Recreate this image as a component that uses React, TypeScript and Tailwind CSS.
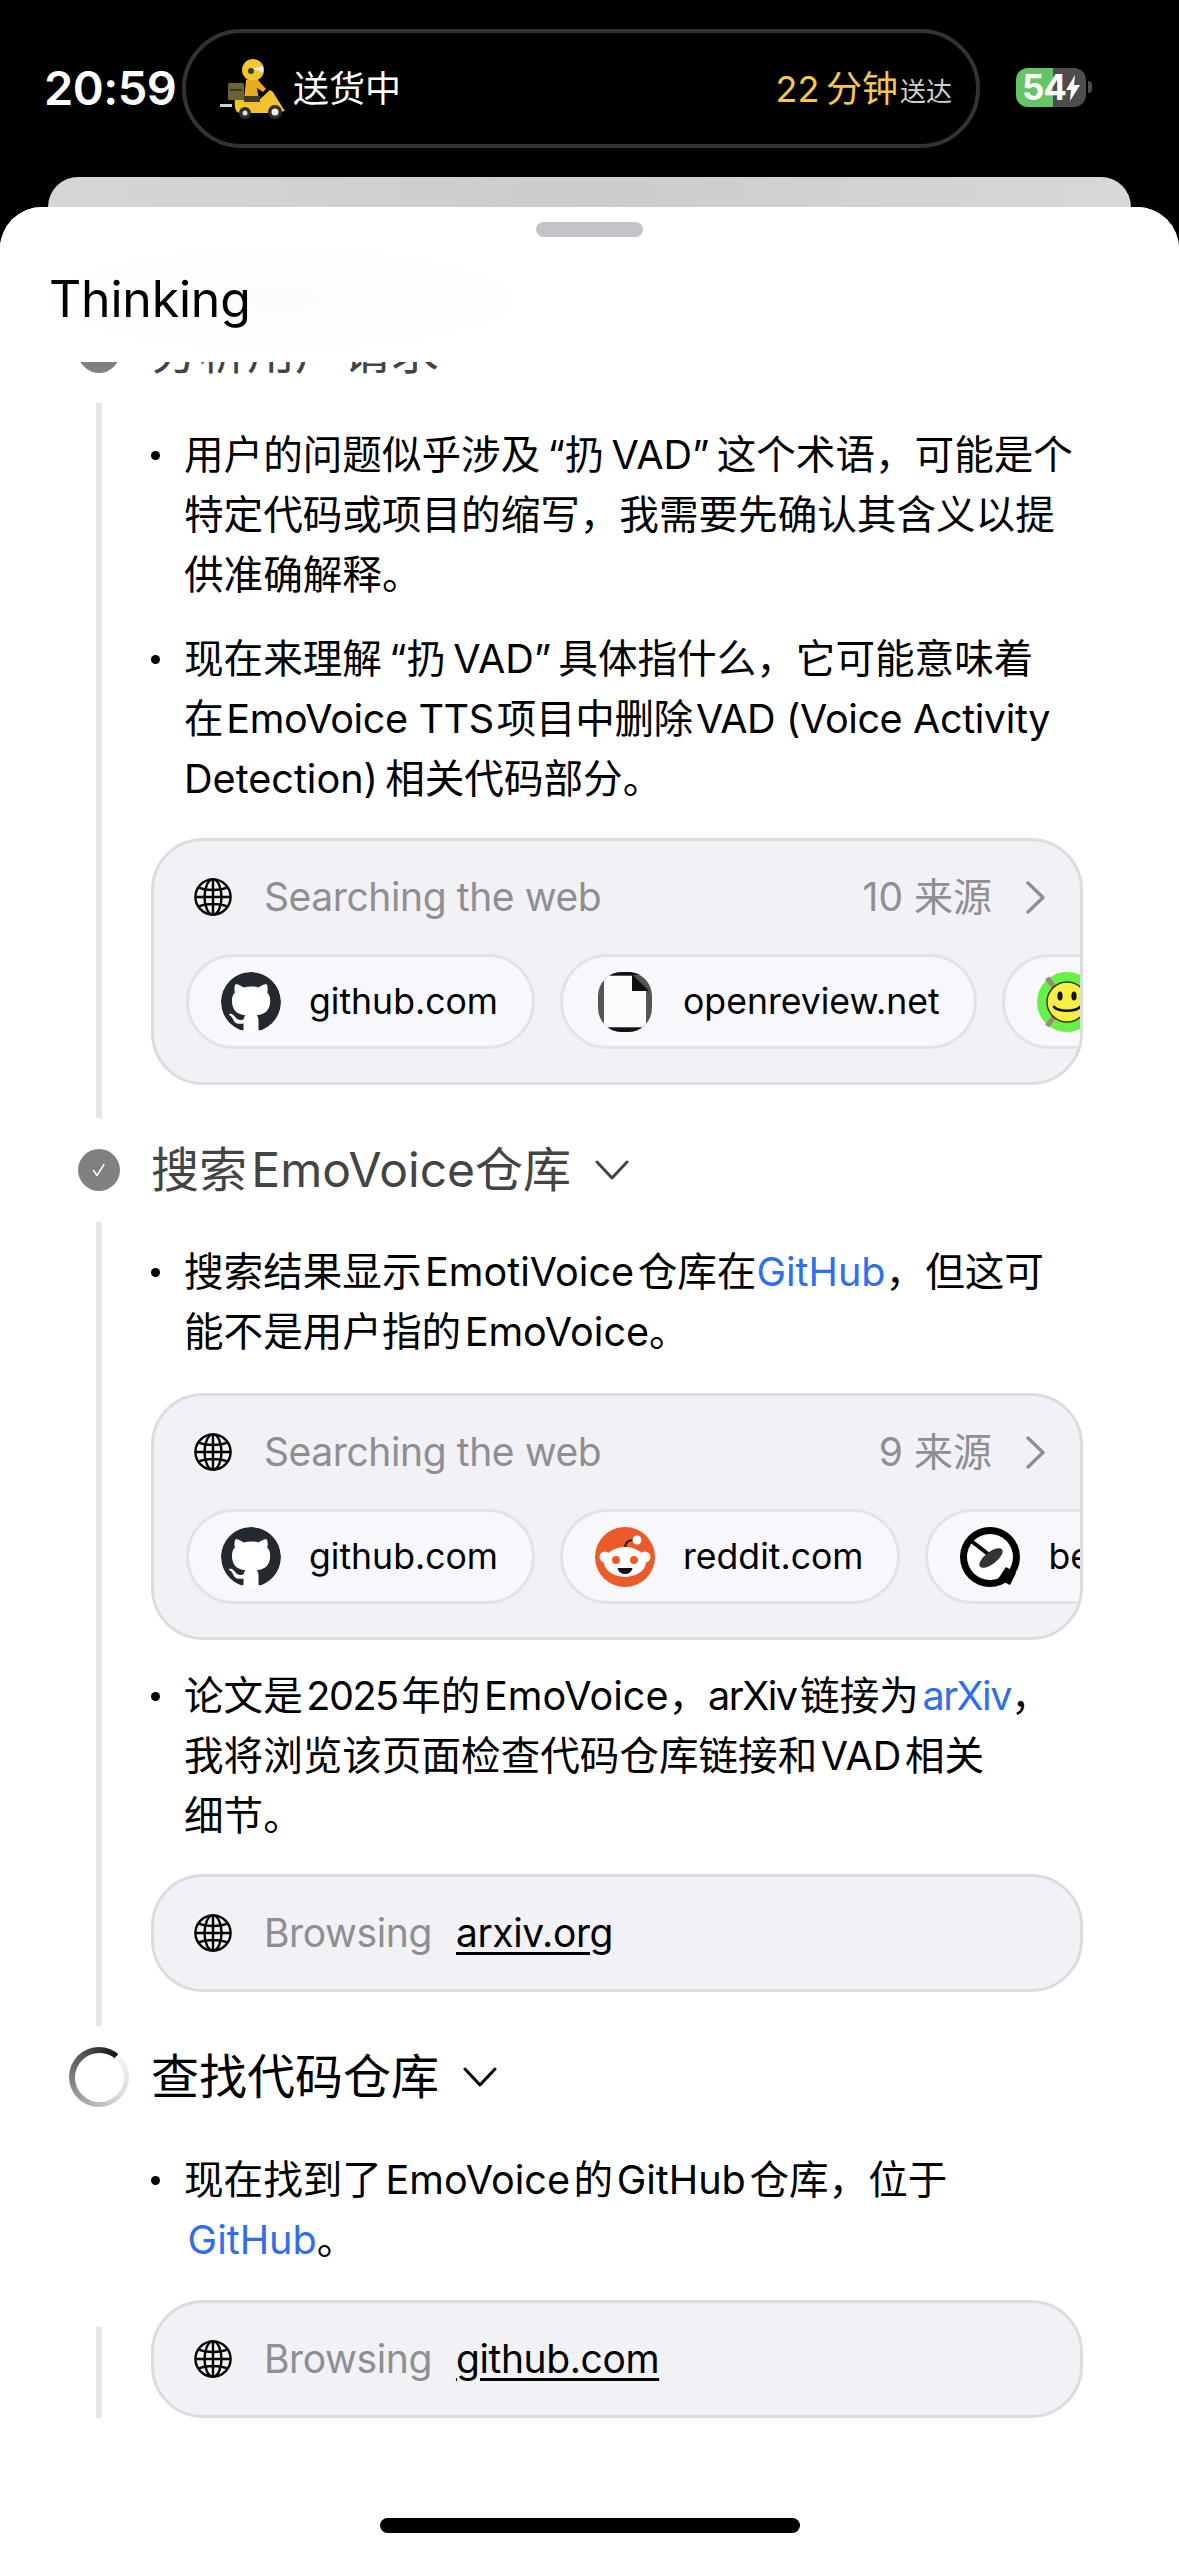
import React from 'react'

const FONT = "font-['Inter','Noto_Sans_CJK_SC',sans-serif]"

// hair and thin spaces stand in for the auto-spacing iOS puts between CJK and latin
const H = '\u200A'
const T = '\u2009'

const GlobeIcon = () => (
  <svg viewBox="0 0 38 38" className="w-[38px] h-[38px] shrink-0" fill="none" stroke="#000" strokeWidth="2.4">
    <circle cx="19" cy="19" r="17.6" />
    <ellipse cx="19" cy="19" rx="8.5" ry="17.6" />
    <path d="M19 1.4v35.2M1.4 19h35.2M4.5 9.5c8 3.4 21 3.4 29 0M4.5 28.5c8-3.4 21-3.4 29 0" />
  </svg>
)

const Chevron = () => (
  <svg viewBox="0 0 21 33" className="w-[21px] h-[33px] shrink-0" fill="none" stroke="#8e8e93" strokeWidth="3.4" strokeLinecap="round" strokeLinejoin="round">
    <path d="M3 2l15 14.5L3 31" />
  </svg>
)

const DownChevron = () => (
  <svg viewBox="0 0 34 20" className="w-[34px] h-[20px] shrink-0" fill="none" stroke="currentColor" strokeWidth="3" strokeLinecap="round" strokeLinejoin="round">
    <path d="M2 2l15 16L32 2" />
  </svg>
)

const GithubIcon = () => (
  <div className="w-[60px] h-[60px] rounded-full bg-white overflow-hidden shrink-0">
    <svg viewBox="0 0 16 16" className="w-[60px] h-[60px]" fill="#24292f">
      <path d="M8 0C3.58 0 0 3.58 0 8c0 3.54 2.29 6.53 5.47 7.59.4.07.55-.17.55-.38 0-.19-.01-.82-.01-1.49-2.01.37-2.53-.49-2.69-.94-.09-.23-.48-.94-.82-1.13-.28-.15-.68-.52-.01-.53.63-.01 1.08.58 1.23.82.72 1.21 1.87.87 2.33.66.07-.52.28-.87.51-1.07-1.78-.2-3.64-.89-3.64-3.95 0-.87.31-1.59.82-2.15-.08-.2-.36-1.02.08-2.12 0 0 .67-.21 2.2.82.64-.18 1.32-.27 2-.27.68 0 1.36.09 2 .27 1.53-1.04 2.2-.82 2.2-.82.44 1.1.16 1.92.08 2.12.51.56.82 1.27.82 2.15 0 3.07-1.87 3.75-3.65 3.95.29.25.54.73.54 1.48 0 1.07-.01 1.93-.01 2.2 0 .21.15.46.55.38A8.013 8.013 0 0016 8c0-4.42-3.58-8-8-8z" />
    </svg>
  </div>
)

const DocIcon = () => (
  <svg viewBox="0 0 60 60" className="w-[60px] h-[60px] shrink-0">
    <clipPath id="doc-clip">
      <rect x="3" y="0" width="54" height="60" rx="24" />
    </clipPath>
    <g clipPath="url(#doc-clip)">
      <rect x="0" y="0" width="60" height="60" fill="#555" />
      <rect x="0" y="0" width="60" height="3" fill="#111" />
      <rect x="0" y="56" width="60" height="4" fill="#111" />
      <path d="M9 4h28l14 14v37H9z" fill="#fbfbfd" />
      <path d="M37 2l17 17H37z" fill="#111" />
    </g>
  </svg>
)

const SmileyIcon = () => (
  <svg viewBox="0 0 60 60" className="w-[60px] h-[60px] shrink-0">
    <circle cx="30" cy="30" r="30" fill="#66f148" />
    <path d="M10 6l8 10M10 54l8-10M50 8l-6 8M50 52l-6-8" stroke="#9a8a70" strokeWidth="5" />
    <circle cx="30" cy="30" r="20" fill="#f7ef45" stroke="#3d3a10" strokeWidth="1.5" />
    <ellipse cx="23" cy="24" rx="2.6" ry="4.6" fill="#111" />
    <ellipse cx="37" cy="24" rx="2.6" ry="4.6" fill="#111" />
    <path d="M17 35c5 5 21 5 26 0" fill="none" stroke="#111" strokeWidth="2.6" strokeLinecap="round" />
  </svg>
)

const RedditIcon = () => (
  <svg viewBox="0 0 60 60" className="w-[60px] h-[60px] shrink-0">
    <circle cx="30" cy="30" r="30" fill="#ed5a29" />
    <path d="M30 22c0-6 2-9 8-9" fill="none" stroke="#1c1c1c" strokeWidth="2" />
    <circle cx="42" cy="13" r="4.5" fill="#fff" />
    <circle cx="10" cy="30" r="5.5" fill="#fff" />
    <circle cx="50" cy="30" r="5.5" fill="#fff" />
    <ellipse cx="30" cy="35" rx="21" ry="15" fill="#fff" />
    <circle cx="21" cy="33" r="4" fill="#ed5a29" />
    <circle cx="39" cy="33" r="4" fill="#ed5a29" />
    <path d="M22.5 41h15c-1 4-4 6-7.500 6s-6.500-2-7.500-6z" fill="#111" />
  </svg>
)

const BeIcon = () => (
  <svg viewBox="0 0 60 60" className="w-[60px] h-[60px] shrink-0">
    <circle cx="30" cy="30" r="30" fill="#000" />
    <circle cx="30" cy="30" r="23" fill="#fff" />
    <path d="M10 13l22 17" stroke="#000" strokeWidth="4" />
    <ellipse cx="31" cy="31" rx="14" ry="6" transform="rotate(-38 31 31)" fill="#333" />
    <path d="M38 52l8-12 10 6-6 12z" fill="#000" />
  </svg>
)

const RiderIcon = () => (
  <svg viewBox="0 0 65 62" className="w-[65px] h-[62px] shrink-0">
    <circle cx="33" cy="12" r="11" fill="#f4c430" />
    <path d="M32 11l11-3v6z" fill="#eee" />
    <circle cx="31" cy="13" r="3" fill="#3a3a3a" />
    <path d="M26 22h12l8 9-3 3-6-4 2 12H24z" fill="#e5ac24" />
    <rect x="8" y="25" width="16" height="17" rx="1" fill="#6b6338" />
    <rect x="10" y="31" width="12" height="2" fill="#3a3618" />
    <path d="M0 46h12v3H0z" fill="#cfcfcf" />
    <path d="M15 42h24l11-10 3 2 8 13 4 6-12 2H20c-4 0-6-5-5-13z" fill="#f3c32e" />
    <path d="M24 38h16v6H24z" fill="#3f3a2c" />
    <circle cx="25" cy="55" r="6" fill="#2d2d2d" />
    <circle cx="25" cy="55" r="2.500" fill="#ddd" />
    <circle cx="55" cy="54" r="7" fill="#2d2d2d" />
    <circle cx="55" cy="54" r="3.500" fill="#eee" />
  </svg>
)

const CheckCircle = () => (
  <div className="w-[42px] h-[42px] rounded-full bg-[#808080] flex items-center justify-center shrink-0">
    <svg viewBox="0 0 16 16" className="w-[16px] h-[16px]" fill="none" stroke="#fff" strokeWidth="1.400" strokeLinecap="round" strokeLinejoin="round">
      <path d="M2.500 8.500l3.500 5L13 2.500" />
    </svg>
  </div>
)

const Spinner = () => (
  <div className="w-[60px] h-[60px] rounded-full bg-[conic-gradient(from_40deg,#f5f5f5_0deg,#dcdcdc_90deg,#b0b0b0_160deg,#7c7c7c_230deg,#484848_300deg,#141414_360deg)] flex items-center justify-center shrink-0">
    <div className="w-[49px] h-[49px] rounded-full bg-white" />
  </div>
)

const Chip = ({ icon, label }: { icon: React.ReactNode; label: string }) => (
  <div className="flex items-center shrink-0 h-[95px] pl-[32px] pr-[34px] gap-[28px] rounded-[48px] border-[3px] border-[#e3e3e7] bg-[#f8f8fc]">
    {icon}
    <span className="text-[35.6px] text-black whitespace-nowrap">{label}</span>
  </div>
)

const SearchCard = ({ count, children }: { count: string; children: React.ReactNode }) => (
  <div className="h-[247px] rounded-[52px] border-[3px] border-[#dcdce0] bg-[#f1f1f6] overflow-hidden pt-[26px]">
    <div className="flex items-center h-[60px] pl-[40px] pr-[34px]">
      <GlobeIcon />
      <span className="ml-[32px] text-[39px] tracking-[-0.4px] text-[#8e8e93]">Searching the web</span>
      <span className="ml-auto mr-[33px] text-[39px] text-[#8e8e93]">{count}</span>
      <Chevron />
    </div>
    <div className="flex gap-[25px] mt-[27px] ml-[32px]">{children}</div>
  </div>
)

const BrowseCard = ({ site }: { site: string }) => (
  <div className="flex-1 flex items-center h-[118px] pl-[40px] rounded-[52px] border-[3px] border-[#dcdce0] bg-[#f1f1f6]">
    <GlobeIcon />
    <span className="ml-[32px] text-[39px] tracking-[-0.4px] text-[#8e8e93]">Browsing</span>
    <span className="ml-[24px] text-[39px] tracking-[-0.4px] text-black underline decoration-[3px] underline-offset-[5px]">{site}</span>
  </div>
)

const Bullet = ({ lines }: { lines: React.ReactNode[] }) => (
  <div className="flex">
    <div className="w-[33px] shrink-0 pt-[26px]">
      <div className="w-[9px] h-[9px] rounded-full bg-black" />
    </div>
    <div className="text-[39.6px] leading-[60px] text-black whitespace-nowrap">
      {lines.map((line, i) => (
        <div key={i}>{line}</div>
      ))}
    </div>
  </div>
)

const Link = ({ children }: { children: React.ReactNode }) => (
  <span className="text-[#2f6fed]">{children}</span>
)

const Tight = ({ children }: { children: React.ReactNode }) => (
  <span className="tracking-[-1.5px]">{children}</span>
)

const StepHeading = ({ icon, title, active }: { icon: React.ReactNode; title: string; active?: boolean }) => (
  <div className={`flex items-center h-[60px] ${active ? 'text-black' : 'text-[#444]'}`}>
    <div className="w-[151px] shrink-0 flex justify-center pl-[54px] pr-[7px]">{icon}</div>
    <span className="text-[48px] whitespace-nowrap">{title}</span>
    <div className="ml-[24px]">
      <DownChevron />
    </div>
  </div>
)

export default function App() {
  return (
    <div className={`${FONT} w-[1179px] h-[2556px] bg-black overflow-hidden flex flex-col`}>
      {/* status bar */}
      <div className="h-[177px] shrink-0 flex items-start pt-[29px] pl-[44px]">
        <span className="w-[138px] mt-[30px] text-[47px] leading-[58px] font-semibold text-white tracking-[-0.5px]">20:59</span>
        <div className="w-[798px] h-[119px] rounded-[60px] border-[4px] border-[#333] flex items-center pl-[34px] pr-[24px]">
          <RiderIcon />
          <span className="ml-[8px] text-[36px] text-white">送货中</span>
          <span className="ml-auto text-[36px] text-[#f5c84b]">{`22${T}分钟`}</span>
          <span className="ml-[2px] mt-[6px] text-[26px] text-[#cfcfcf]">送达</span>
        </div>
        <div className="relative ml-[36px] mt-[39px] w-[70px] h-[39px] rounded-[12px] overflow-hidden bg-[#4d4d4d] flex items-center justify-center">
          <div className="absolute left-0 top-0 h-full w-[37px] bg-[#65c466]" />
          <span className="relative text-[35px] leading-[39px] font-bold text-white tracking-[-1px]">54</span>
          <svg viewBox="0 0 14 26" className="relative w-[14px] h-[26px]" fill="#fff">
            <path d="M9 0L0 15h5l-1 11 10-16H8z" />
          </svg>
        </div>
        <div className="ml-[2px] mt-[52px] w-[4px] h-[12px] rounded-r-full bg-[#4d4d4d]" />
      </div>

      <div className="mx-[48px] h-[30px] shrink-0 rounded-t-[30px] bg-gradient-to-r from-[#d6d6d6] via-[#cccccc] to-[#d8d8d8]" />

      {/* sheet */}
      <div className="relative flex-1 rounded-t-[42px] bg-white overflow-hidden">
        <div className="relative z-20 mx-auto mt-[15px] w-[107px] h-[15px] rounded-[8px] bg-[#c4c4c8]" />

        <div className="mt-[85px]">
          <StepHeading icon={<CheckCircle />} title="分析用户请求" />
          <div className="mt-[21px] mb-[22px] ml-[96px] border-l-[6px] border-[#e5e5e5] pl-[49px] pr-[96px] pt-[22px] pb-[33px]">
            <Bullet
              lines={[
                `用户的问题似乎涉及${T}“扔${T}VAD”${T}这个术语，可能是个`,
                '特定代码或项目的缩写，我需要先确认其含义以提',
                '供准确解释。',
              ]}
            />
            <div className="mt-[24px]">
              <Bullet
                lines={[
                  `现在来理解${T}“扔${T}VAD”${T}具体指什么，它可能意味着`,
                  <span className="tracking-[-0.4px]">{`在${H}EmoVoice TTS${H}项目中删除${H}VAD (Voice Activity`}</span>,
                  `Detection)${T}相关代码部分。`,
                ]}
              />
            </div>
            <div className="mt-[29px]">
              <SearchCard count="10 来源">
                <Chip icon={<GithubIcon />} label="github.com" />
                <Chip icon={<DocIcon />} label="openreview.net" />
                <Chip icon={<SmileyIcon />} label="smiley.com" />
              </SearchCard>
            </div>
          </div>

          <StepHeading icon={<CheckCircle />} title={`搜索${H}EmoVoice仓库`} />
          <div className="mt-[22px] mb-[21px] ml-[96px] border-l-[6px] border-[#e5e5e5] pl-[49px] pr-[96px] pt-[20px] pb-[34px]">
            <Bullet
              lines={[
                <>
                  {`搜索结果显示${H}EmotiVoice${H}仓库在`}
                  <Link>GitHub</Link>，但这可
                </>,
                `能不是用户指的${H}EmoVoice。`,
              ]}
            />
            <div className="mt-[31px]">
              <SearchCard count="9 来源">
                <Chip icon={<GithubIcon />} label="github.com" />
                <Chip icon={<RedditIcon />} label="reddit.com" />
                <Chip icon={<BeIcon />} label="bensbites.com" />
              </SearchCard>
            </div>
            <div className="mt-[26px]">
              <Bullet
                lines={[
                  <>
                    {`论文是${H}`}
                    <Tight>2025</Tight>
                    {`${H}年的${H}EmoVoice，`}
                    <Tight>arXiv</Tight>
                    {`${H}链接为${H}`}
                    <Link>
                      <Tight>arXiv</Tight>
                    </Link>
                    ，
                  </>,
                  `我将浏览该页面检查代码仓库链接和${H}VAD${H}相关`,
                  '细节。',
                ]}
              />
            </div>
            <div className="flex mt-[28px]">
              <BrowseCard site="arxiv.org" />
            </div>
          </div>

          <StepHeading active icon={<Spinner />} title="查找代码仓库" />
          <div className="mt-[43px] ml-[102px] pl-[49px] pr-[96px]">
            <Bullet
              lines={[
                `现在找到了${H}EmoVoice${H}的${H}GitHub${H}仓库，位于`,
                <>
                  {H}
                  <Link>GitHub</Link>。
                </>,
              ]}
            />
          </div>
          <div className="flex items-end mt-[30px] ml-[96px] pr-[96px]">
            <div className="w-[6px] h-[91px] bg-[#e5e5e5] shrink-0" />
            <div className="flex flex-1 ml-[49px]">
              <BrowseCard site="github.com" />
            </div>
          </div>
        </div>

        {/* sticky title, sits over the scrolled list */}
        <div className="absolute z-10 top-0 left-0 w-full h-[155px] bg-white">
          <div className="absolute left-0 top-[30px] w-[560px] h-[125px] bg-[radial-gradient(closest-side,#fcfcfc,#ffffff)]" />
          <span className="absolute left-[49px] top-[62px] text-[50px] leading-[60px] text-black tracking-[-0.2px]">Thinking</span>
        </div>

        <div className="absolute z-20 left-[380px] bottom-[23px] w-[420px] h-[15px] rounded-full bg-black" />
      </div>
    </div>
  )
}
